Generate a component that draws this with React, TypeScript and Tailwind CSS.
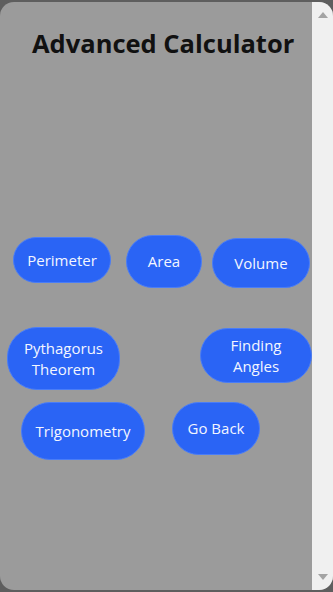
import React from 'react';

type Btn = { label: string[]; cls: string };

const rows: Btn[][] = [
  [
    { label: ['Perimeter'], cls: 'ml-[13px] mt-[2px] w-[98px] h-[46px]' },
    { label: ['Area'], cls: 'ml-[15px] w-[76px] h-[53px]' },
    { label: ['Volume'], cls: 'ml-[10px] mt-[3px] w-[98px] h-[50px]' },
  ],
  [
    { label: ['Pythagorus', 'Theorem'], cls: 'ml-[7px] w-[113px] h-[63px]' },
    { label: ['Finding', 'Angles'], cls: 'ml-[80px] mt-[1px] w-[112px] h-[55px]' },
  ],
  [
    { label: ['Trigonometry'], cls: 'ml-[21px] w-[124px] h-[58px]' },
    { label: ['Go Back'], cls: 'ml-[27px] w-[88px] h-[53px]' },
  ],
];

const Arrow = ({ down }: { down?: boolean }) => (
  <svg width="10" height="6" viewBox="0 0 10 6" className={down ? 'rotate-180' : ''}>
    <path d="M0 6 L5 0 L10 6 Z" fill="#a3a3a3" />
  </svg>
);

export default function App() {
  return (
    <div className="h-[592px] w-[333px] bg-[#5e5e5e] py-[2px] overflow-hidden" style={{ fontFamily: '"Open Sans", "Noto Sans", sans-serif' }}>
      <div className="h-full flex rounded-[14px] overflow-hidden bg-[#9b9b9b]">
        <div className="flex-1 flex flex-col">
          <h1 className="pl-[32px] pt-[24px] text-[25.5px] leading-[34px] font-bold text-[#111] whitespace-nowrap">
            Advanced Calculator
          </h1>

          <div className="mt-[175px] flex flex-col">
            {rows.map((row, i) => (
              <div key={i} className={`flex items-start ${i === 1 ? 'mt-[39px]' : i === 2 ? 'mt-[12px]' : ''}`}>
                {row.map(b => (
                  <button
                    key={b.label.join(' ')}
                    className={`${b.cls} shrink-0 rounded-[30px] bg-[#2a64f5] border border-[#4a7df7] text-[#f3f6ff] text-[15px] leading-[21px] font-medium flex flex-col items-center justify-center`}
                  >
                    {b.label.map(l => (
                      <span key={l}>{l}</span>
                    ))}
                  </button>
                ))}
              </div>
            ))}
          </div>
        </div>

        {/* scrollbar */}
        <div className="w-[21px] bg-[#f0f0f0] flex flex-col items-center justify-between py-[10px]">
          <Arrow />
          <Arrow down />
        </div>
      </div>
    </div>
  );
}
